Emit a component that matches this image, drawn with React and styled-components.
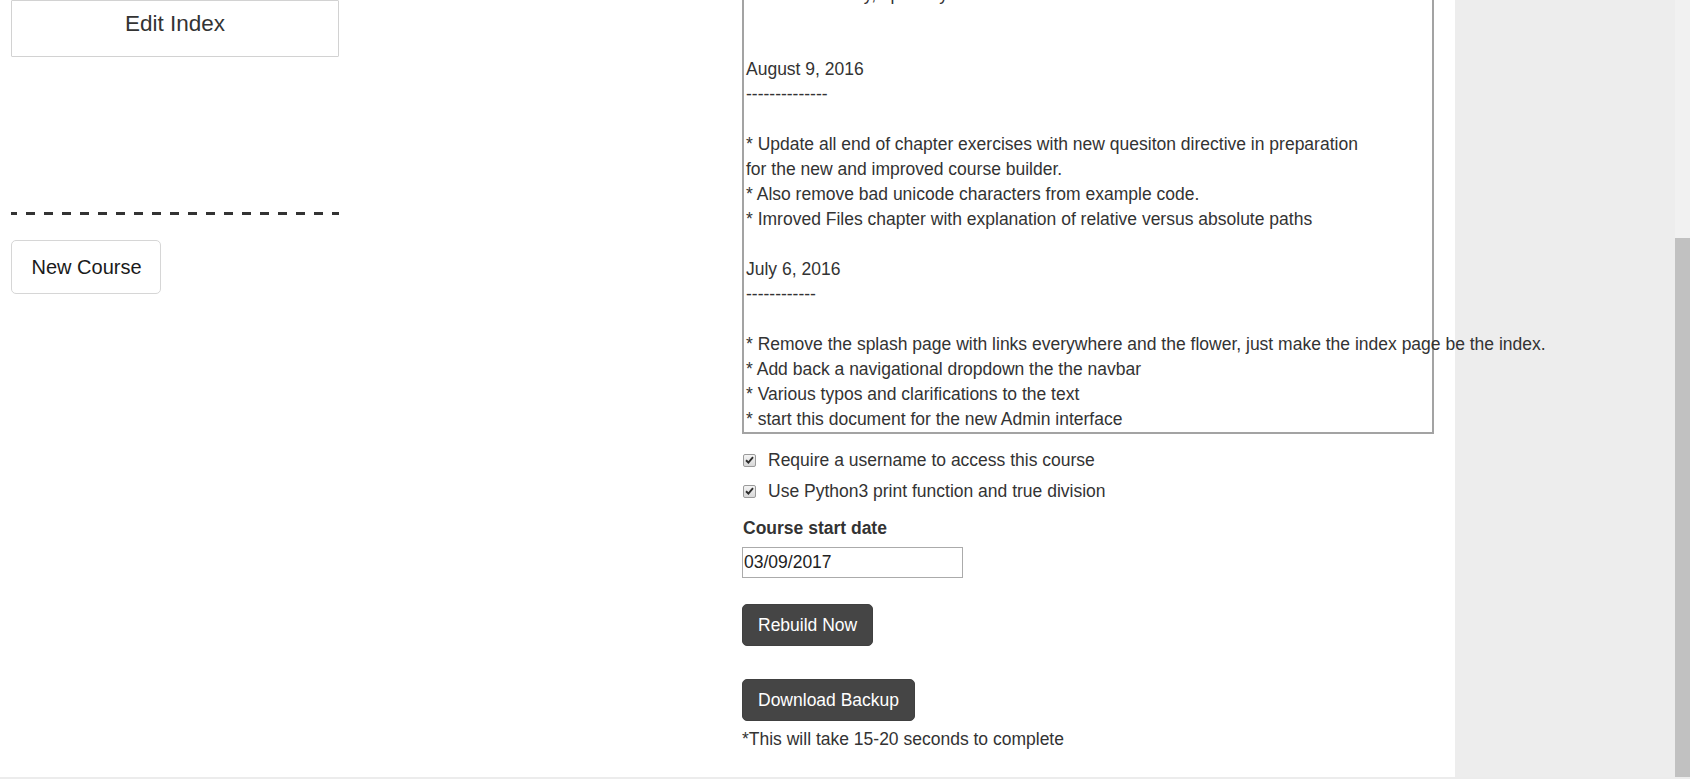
import React from 'react';
import styled, { createGlobalStyle } from 'styled-components';

const GlobalStyle = createGlobalStyle`
  html, body {
    margin: 0;
    padding: 0;
    background: #fff;
  }
  body {
    font-family: "Liberation Sans", Arial, sans-serif;
    font-size: 17.5px;
    line-height: 25px;
    color: #333;
  }
`;

const Page = styled.div`
  display: flex;
  flex-direction: column;
  width: 1690px;
  height: 779px;
  overflow: hidden;
`;

const Body = styled.div`
  display: flex;
  height: 777px;
`;

const Content = styled.div`
  position: relative;
  z-index: 1;
  display: flex;
  width: 1455px;
  flex-shrink: 0;
`;

const LeftCol = styled.div`
  display: flex;
  flex-direction: column;
  align-items: flex-start;
  width: 328px;
  padding-left: 11px;
`;

const EditButton = styled.div`
  box-sizing: border-box;
  width: 328px;
  height: 57px;
  padding-top: 8px;
  border: 1px solid #d2d2d2;
  border-radius: 1px;
  font-size: 22.5px;
  line-height: 30px;
  text-align: center;
  color: #333;
`;

const Divider = styled.div`
  width: 328px;
  height: 3px;
  margin-top: 155px;
  background: repeating-linear-gradient(90deg, #333 0 9px, transparent 9px 18px);
  background-position: -3px 0;
`;

const NewCourse = styled.div`
  box-sizing: border-box;
  height: 54px;
  margin-top: 25px;
  padding: 12px 18.5px 12px 19.5px;
  border: 1px solid #d6d6d6;
  border-radius: 5px;
  font-size: 20px;
  line-height: 29px;
  color: #1a1a1a;
`;

const MainCol = styled.div`
  display: flex;
  flex-direction: column;
  align-items: flex-start;
  margin-left: 403px;
`;

const ChangeLog = styled.div`
  box-sizing: border-box;
  width: 692px;
  height: 454.5px;
  margin-top: -20.5px;
  padding: 0 2px;
  border: 2px solid #a3a3a3;
  white-space: pre;
  overflow: visible;
  color: #333;
`;

const CheckRow = styled.label`
  display: flex;
  align-items: center;
  gap: 12px;
  margin-top: ${(p) => p.$top}px;
  padding-left: 1px;
  height: 25px;
`;

const Box = styled.span`
  box-sizing: border-box;
  display: flex;
  align-items: center;
  justify-content: center;
  width: 13px;
  height: 13px;
  border: 1px solid #9a9a9a;
  border-radius: 2px;
  background: linear-gradient(#f4f4f4, #d8d8d8);
`;

const FieldLabel = styled.div`
  margin-top: 12px;
  padding-left: 1px;
  font-weight: bold;
  color: #333;
`;

const DateInput = styled.div`
  box-sizing: border-box;
  width: 221px;
  height: 31px;
  margin-top: 6.5px;
  padding: 2px 1px;
  border: 1px solid #ababab;
  color: #222;
`;

const DarkButton = styled.div`
  box-sizing: border-box;
  margin-top: ${(p) => p.$top}px;
  padding: 7.5px 15px;
  border: 1px solid #404040;
  border-radius: 5px;
  background: #454545;
  color: #fff;
`;

const Note = styled.div`
  margin-top: 5.5px;
  color: #333;
`;

const Sidebar = styled.div`
  width: 220px;
  flex-shrink: 0;
  background: #ededed;
`;

const Track = styled.div`
  display: flex;
  flex-direction: column;
  width: 15px;
  flex-shrink: 0;
  background: #f1f1f1;
`;

const Thumb = styled.div`
  margin-top: 238px;
  flex: 1;
  background: #c1c1c1;
`;

const BottomBar = styled.div`
  height: 2px;
  background: #ececec;
`;

const log = [
  '* Fixed the early, up to my own notes',
  '',
  '',
  'August 9, 2016',
  '--------------',
  '',
  '* Update all end of chapter exercises with new quesiton directive in preparation',
  'for the new and improved course builder.',
  '* Also remove bad unicode characters from example code.',
  '* Imroved Files chapter with explanation of relative versus absolute paths',
  '',
  'July 6, 2016',
  '------------',
  '',
  '* Remove the splash page with links everywhere and the flower, just make the index page be the index.',
  '* Add back a navigational dropdown the the navbar',
  '* Various typos and clarifications to the text',
  '* start this document for the new Admin interface',
].join('\n');

const Check = () => (
  <Box>
    <svg width="9" height="8" viewBox="0 0 9 8">
      <path d="M1 4.2 L3.4 6.5 L8 1.2" fill="none" stroke="#2d2d2d" strokeWidth="1.9" />
    </svg>
  </Box>
);

const App = () => (
  <Page>
    <GlobalStyle />
    <Body>
      <Content>
        <LeftCol>
          <EditButton>Edit Index</EditButton>
          <Divider />
          <NewCourse>New Course</NewCourse>
        </LeftCol>
        <MainCol>
          <ChangeLog>{log}</ChangeLog>
          <CheckRow $top={13.5}>
            <Check />
            Require a username to access this course
          </CheckRow>
          <CheckRow $top={6}>
            <Check />
            Use Python3 print function and true division
          </CheckRow>
          <FieldLabel>Course start date</FieldLabel>
          <DateInput>03/09/2017</DateInput>
          <DarkButton $top={26}>Rebuild Now</DarkButton>
          <DarkButton $top={33}>Download Backup</DarkButton>
          <Note>*This will take 15-20 seconds to complete</Note>
        </MainCol>
      </Content>
      <Sidebar />
      <Track>
        <Thumb />
      </Track>
    </Body>
    <BottomBar />
  </Page>
);

export default App;
